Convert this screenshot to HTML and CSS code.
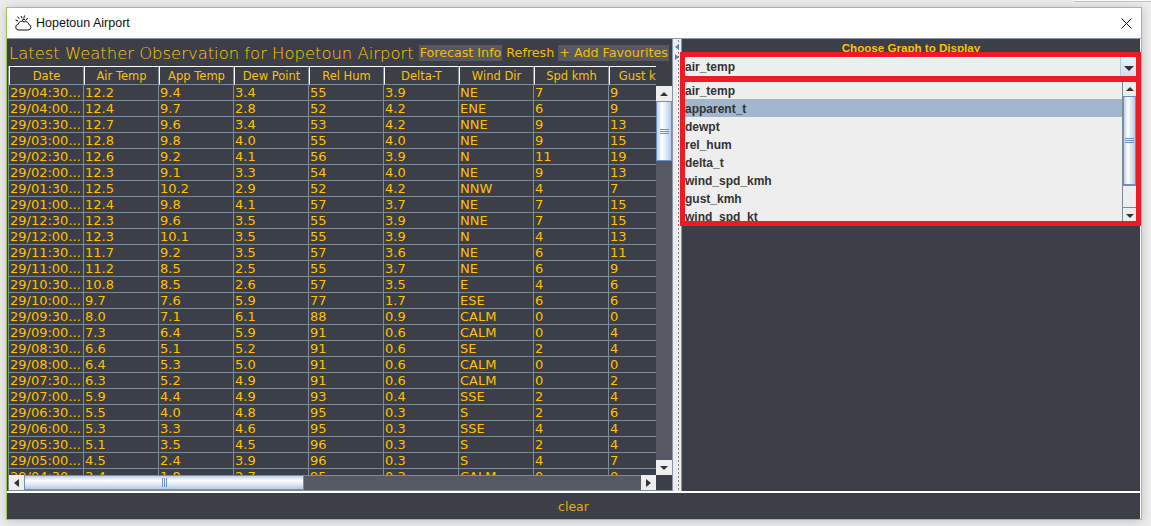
FILE: index.html
```html
<!DOCTYPE html>
<html lang="en">
    <head>
        <meta charset="UTF-8">
        <meta name="viewport" content="width=device-width, initial-scale=1.0">
        <title>Hopetoun Airport</title>
        <link rel="stylesheet" href="styles.css">
    </head>
    <body>
        <div class="window">
            <header class="titlebar">
                <svg class="app-icon" width="17" height="16" viewBox="0 0 17 16" fill="none" stroke="#111" stroke-width="1">
                    <path d="M3 15h10a2.8 2.8 0 0 0 .8-5.5a3.2 3.2 0 0 0-4.6-2.6a3.8 3.8 0 0 0-6 2.4a2.9 2.9 0 0 0-.2 5.7z"/>
                    <path d="M6 1l1.2 2.5M.5 5l2.5 .8M2.5 1.5l1.7 2.2M9.5 .5l-.7 3M13 3l-2.2 2M7 5.5l2-1.5l1.5 1.5"/>
                </svg>
                <span class="window-title">Hopetoun Airport</span>
                <svg class="close-icon" width="11" height="11" viewBox="0 0 11 11" stroke="#111" stroke-width="1"><path d="M.5 .5l10 10M10.5 .5l-10 10"/></svg>
            </header>
            <div class="content">
                <section class="left-pane">
                    <div class="obs-head">
                        <h1>Latest Weather Observation for Hopetoun Airport</h1>
                        <span class="head-btn active">Forecast Info</span>
                        <span class="head-btn">Refresh</span>
                        <span class="head-btn active">+ Add Favourites</span>
                    </div>
                    <div class="table-wrap">
                        <div class="table-row-wrap">
                            <div class="table-view">
                                <table class="obs-table">
                                    <thead>
                                        <tr><th>Date</th><th>Air Temp</th><th>App Temp</th><th>Dew Point</th><th>Rel Hum</th><th>Delta-T</th><th>Wind Dir</th><th>Spd kmh</th><th>Gust kmh</th></tr>
                                    </thead>
                                    <tbody>
                                        <tr><td>29/04:30...</td><td>12.2</td><td>9.4</td><td>3.4</td><td>55</td><td>3.9</td><td>NE</td><td>7</td><td>9</td></tr>
                                        <tr><td>29/04:00...</td><td>12.4</td><td>9.7</td><td>2.8</td><td>52</td><td>4.2</td><td>ENE</td><td>6</td><td>9</td></tr>
                                        <tr><td>29/03:30...</td><td>12.7</td><td>9.6</td><td>3.4</td><td>53</td><td>4.2</td><td>NNE</td><td>9</td><td>13</td></tr>
                                        <tr><td>29/03:00...</td><td>12.8</td><td>9.8</td><td>4.0</td><td>55</td><td>4.0</td><td>NE</td><td>9</td><td>15</td></tr>
                                        <tr><td>29/02:30...</td><td>12.6</td><td>9.2</td><td>4.1</td><td>56</td><td>3.9</td><td>N</td><td>11</td><td>19</td></tr>
                                        <tr><td>29/02:00...</td><td>12.3</td><td>9.1</td><td>3.3</td><td>54</td><td>4.0</td><td>NE</td><td>9</td><td>13</td></tr>
                                        <tr><td>29/01:30...</td><td>12.5</td><td>10.2</td><td>2.9</td><td>52</td><td>4.2</td><td>NNW</td><td>4</td><td>7</td></tr>
                                        <tr><td>29/01:00...</td><td>12.4</td><td>9.8</td><td>4.1</td><td>57</td><td>3.7</td><td>NE</td><td>7</td><td>15</td></tr>
                                        <tr><td>29/12:30...</td><td>12.3</td><td>9.6</td><td>3.5</td><td>55</td><td>3.9</td><td>NNE</td><td>7</td><td>15</td></tr>
                                        <tr><td>29/12:00...</td><td>12.3</td><td>10.1</td><td>3.5</td><td>55</td><td>3.9</td><td>N</td><td>4</td><td>13</td></tr>
                                        <tr><td>29/11:30...</td><td>11.7</td><td>9.2</td><td>3.5</td><td>57</td><td>3.6</td><td>NE</td><td>6</td><td>11</td></tr>
                                        <tr><td>29/11:00...</td><td>11.2</td><td>8.5</td><td>2.5</td><td>55</td><td>3.7</td><td>NE</td><td>6</td><td>9</td></tr>
                                        <tr><td>29/10:30...</td><td>10.8</td><td>8.5</td><td>2.6</td><td>57</td><td>3.5</td><td>E</td><td>4</td><td>6</td></tr>
                                        <tr><td>29/10:00...</td><td>9.7</td><td>7.6</td><td>5.9</td><td>77</td><td>1.7</td><td>ESE</td><td>6</td><td>6</td></tr>
                                        <tr><td>29/09:30...</td><td>8.0</td><td>7.1</td><td>6.1</td><td>88</td><td>0.9</td><td>CALM</td><td>0</td><td>0</td></tr>
                                        <tr><td>29/09:00...</td><td>7.3</td><td>6.4</td><td>5.9</td><td>91</td><td>0.6</td><td>CALM</td><td>0</td><td>4</td></tr>
                                        <tr><td>29/08:30...</td><td>6.6</td><td>5.1</td><td>5.2</td><td>91</td><td>0.6</td><td>SE</td><td>2</td><td>4</td></tr>
                                        <tr><td>29/08:00...</td><td>6.4</td><td>5.3</td><td>5.0</td><td>91</td><td>0.6</td><td>CALM</td><td>0</td><td>0</td></tr>
                                        <tr><td>29/07:30...</td><td>6.3</td><td>5.2</td><td>4.9</td><td>91</td><td>0.6</td><td>CALM</td><td>0</td><td>2</td></tr>
                                        <tr><td>29/07:00...</td><td>5.9</td><td>4.4</td><td>4.9</td><td>93</td><td>0.4</td><td>SSE</td><td>2</td><td>4</td></tr>
                                        <tr><td>29/06:30...</td><td>5.5</td><td>4.0</td><td>4.8</td><td>95</td><td>0.3</td><td>S</td><td>2</td><td>6</td></tr>
                                        <tr><td>29/06:00...</td><td>5.3</td><td>3.3</td><td>4.6</td><td>95</td><td>0.3</td><td>SSE</td><td>4</td><td>4</td></tr>
                                        <tr><td>29/05:30...</td><td>5.1</td><td>3.5</td><td>4.5</td><td>96</td><td>0.3</td><td>S</td><td>2</td><td>4</td></tr>
                                        <tr><td>29/05:00...</td><td>4.5</td><td>2.4</td><td>3.9</td><td>96</td><td>0.3</td><td>S</td><td>4</td><td>7</td></tr>
                                        <tr><td>29/04:30...</td><td>3.4</td><td>1.8</td><td>2.7</td><td>95</td><td>0.3</td><td>CALM</td><td>0</td><td>0</td></tr>
                                    </tbody>
                                </table>
                            </div>
                            <div class="vbar">
                                <div class="sb-btn"><span class="tri up"></span></div>
                                <div class="v-thumb"><span class="grip-h"></span></div>
                                <div class="sb-track"></div>
                                <div class="sb-btn"><span class="tri down"></span></div>
                            </div>
                        </div>
                        <div class="hbar">
                            <div class="sb-btn wide"><span class="tri left"></span></div>
                            <div class="h-thumb"><span class="grip-v"></span></div>
                            <div class="sb-track"></div>
                            <div class="sb-btn wide"><span class="tri right"></span></div>
                            <div class="hbar-corner"></div>
                        </div>
                    </div>
                </section>
                <div class="splitter">
                    <span class="tri small-left"></span>
                    <span class="tri small-right"></span>
                </div>
                <section class="right-pane">
                    <div class="graph-label">Choose Graph to Display</div>
                    <div class="combo">
                        <div class="combo-value">air_temp</div>
                        <div class="combo-arrow"><span class="tri down"></span></div>
                    </div>
                    <div class="popup">
                        <ul class="graph-list">
                            <li>air_temp</li>
                            <li class="selected">apparent_t</li>
                            <li>dewpt</li>
                            <li>rel_hum</li>
                            <li>delta_t</li>
                            <li>wind_spd_kmh</li>
                            <li>gust_kmh</li>
                            <li>wind_spd_kt</li>
                        </ul>
                        <div class="vbar">
                            <div class="sb-btn"><span class="tri up"></span></div>
                            <div class="v-thumb list-thumb"><span class="grip-h"></span></div>
                            <div class="sb-track light"></div>
                            <div class="sb-btn"><span class="tri down"></span></div>
                        </div>
                    </div>
                    <div class="annot combo-annot"></div>
                    <div class="annot list-annot"></div>
                </section>
            </div>
            <footer class="footer">clear</footer>
        </div>
    </body>
</html>
```

FILE: styles.css
```css
html, body {
    height: 100%;
}

body {
    margin: 0;
    padding: 7px 9px 6px 6px;
    box-sizing: border-box;
    background-color: #eeeeee;
    font-family: "DejaVu Sans", sans-serif;
    overflow: hidden;
}

/* tab edge of the window behind, top right */
body::before {
    content: '';
    position: absolute;
    top: 0;
    left: 1074px;
    right: 0;
    height: 1px;
    background-color: #fafafa;
    border-bottom: 1px solid #c4c4c4;
}

.window {
    width: 1136px;
    height: 513px;
    box-sizing: border-box;
    border: 1px solid #a3c75a;
    background-color: #fff;
    display: flex;
    flex-direction: column;
    box-shadow: 0 1px 10px rgba(0, 0, 0, 0.2);
}

.titlebar {
    height: 31px;
    flex: none;
    background-color: #fff;
    display: flex;
    align-items: center;
    padding: 0 9px 0 8px;
    border-bottom: 1px solid #8b97a6;
    box-sizing: border-box;
}

.app-icon {
    margin-right: 4px;
}

.window-title {
    font-family: "Liberation Sans", Arial, sans-serif;
    font-size: 12.5px;
    color: #111;
    flex: 1;
}

.content {
    flex: 1;
    display: flex;
    min-height: 0;
    margin-right: 1px;
    background-color: #3c3f47;
    border-bottom: 2px solid #fff;
}

.left-pane {
    width: 665px;
    flex: none;
    display: flex;
    flex-direction: column;
    box-sizing: border-box;
    padding-left: 1px;
}

.obs-head {
    height: 27px;
    flex: none;
    display: flex;
    align-items: center;
    white-space: nowrap;
    padding-left: 1px;
}

.obs-head h1 {
    margin: 1px 5px 0 0;
    font-size: 16.42px;
    font-weight: 200;
    color: #ffc800;
}

.head-btn {
    font-size: 12.7px;
    padding: 0 1px;
    height: 16px;
    line-height: 16px;
    margin-right: 3px;
    color: #f7bb00;
}

.head-btn.active {
    background-color: #565963;
}

.table-wrap {
    flex: 1;
    min-height: 0;
    display: flex;
    flex-direction: column;
    border-left: 1px solid #7d8a97;
}

.table-row-wrap {
    flex: 1;
    min-height: 0;
    display: flex;
}

.table-view {
    width: 647px;
    overflow: hidden;
}

.obs-table {
    border-collapse: separate;
    border-spacing: 0;
    table-layout: fixed;
    width: 675px;
    font-size: 13px;
    color: #ffc000;
}

.obs-table th {
    height: 19px;
    padding: 1px 0 0;
    box-sizing: border-box;
    font-size: 11.5px;
    font-weight: normal;
    white-space: nowrap;
    border-top: 1px solid #fff;
    border-left: 1px solid #fff;
    border-right: 1px solid #7d8a97;
    border-bottom: 1px solid #7d8a97;
    text-align: center;
}

.obs-table td {
    height: 16px;
    padding: 1px 0 0 1px;
    box-sizing: border-box;
    border-right: 1px solid #7d8a97;
    border-bottom: 1px solid #7d8a97;
    line-height: 14px;
    white-space: nowrap;
    overflow: hidden;
}

.vbar {
    width: 16px;
    flex: none;
    display: flex;
    flex-direction: column;
    padding-top: 20px;
    background-color: #3c3f47;
}

.sb-btn {
    height: 15px;
    flex: none;
    background-color: #eeeeee;
    display: flex;
    align-items: center;
    justify-content: center;
}

.sb-btn.wide {
    width: 15px;
    height: auto;
}

.sb-track {
    flex: 1;
    background-color: #565963;
}

.sb-track.light {
    background-color: #eeeeee;
    border-top: 1px solid #7d8a97;
    border-bottom: 1px solid #7d8a97;
}

.v-thumb {
    height: 60px;
    flex: none;
    box-sizing: border-box;
    border: 1px solid #6d8ec8;
    background: linear-gradient(90deg, #bcd0ea, #fff 35%, #e4edf7 60%, #b4c9e6);
    display: flex;
    align-items: center;
    justify-content: center;
}

.v-thumb.list-thumb {
    height: 89px;
}

.grip-h {
    width: 9px;
    height: 5px;
    background: repeating-linear-gradient(#6d8ec8 0, #6d8ec8 1px, transparent 1px, transparent 2px);
}

.hbar {
    height: 16px;
    flex: none;
    display: flex;
    border-bottom: 1px solid #7d8a97;
    box-sizing: border-box;
}

.hbar .sb-track {
    border-top: 1px solid #7d8a97;
}

.h-thumb {
    width: 280px;
    flex: none;
    box-sizing: border-box;
    border: 1px solid #6d8ec8;
    background: linear-gradient(#bcd0ea, #fff 35%, #e4edf7 60%, #b4c9e6);
    display: flex;
    align-items: center;
    justify-content: center;
}

.grip-v {
    width: 5px;
    height: 9px;
    background: repeating-linear-gradient(90deg, #6d8ec8 0, #6d8ec8 1px, transparent 1px, transparent 2px);
}

.hbar-corner {
    width: 16px;
    flex: none;
    background-color: #3c3f47;
}

.tri {
    width: 0;
    height: 0;
    display: block;
    border-style: solid;
    border-color: transparent;
}

.tri.up {
    border-width: 0 4.5px 4.5px;
    border-bottom-color: #333;
}

.tri.down {
    border-width: 4.5px 4.5px 0;
    border-top-color: #333;
}

.tri.left {
    border-width: 4.5px 5px 4.5px 0;
    border-right-color: #333;
}

.tri.right {
    border-width: 4.5px 0 4.5px 5px;
    border-left-color: #333;
}

.tri.small-left {
    border-width: 3.5px 4px 3.5px 0;
    border-right-color: #5d7fb8;
}

.tri.small-right {
    border-width: 3.5px 0 3.5px 4px;
    border-left-color: #5d7fb8;
}

.splitter {
    width: 10px;
    flex: none;
    box-sizing: border-box;
    border-left: 1px solid #8b97a6;
    border-right: 1px solid #8b97a6;
    background-color: #eeeeee;
    background-image: radial-gradient(#7d828c 0.8px, transparent 0.9px);
    background-size: 3px 4px;
    background-repeat: repeat-y;
    background-position: 4px 0;
    display: flex;
    flex-direction: column;
    align-items: flex-start;
    gap: 4px;
    padding: 5px 0 0 2px;
}

.right-pane {
    flex: 1;
    position: relative;
    min-width: 0;
    display: flex;
    flex-direction: column;
}

.graph-label {
    height: 18px;
    flex: none;
    text-align: center;
    font-family: "Liberation Sans", Arial, sans-serif;
    font-size: 11.6px;
    font-weight: bold;
    line-height: 17px;
    color: #ffc000;
}

.combo {
    height: 19px;
    flex: none;
    margin-right: 4px;
    display: flex;
    font-family: "Liberation Sans", Arial, sans-serif;
    font-size: 12px;
    font-weight: bold;
    color: #333;
}

.combo-value {
    flex: 1;
    background-color: #eeeeee;
    padding-left: 3px;
    line-height: 21px;
    border-right: 1px solid #b9cbe0;
}

.combo-arrow {
    width: 15px;
    flex: none;
    background: linear-gradient(#eef3f9, #d2dfef);
    display: flex;
    align-items: center;
    justify-content: center;
    padding-top: 3px;
    box-sizing: border-box;
}

.combo-arrow .tri.down {
    border-width: 5px 5px 0;
}

.popup {
    height: 142px;
    flex: none;
    margin-top: 5px;
    margin-right: 4px;
    display: flex;
    background-color: #eeeeee;
}

.graph-list {
    flex: 1;
    list-style: none;
    margin: 0;
    padding: 0;
    overflow: hidden;
    font-family: "Liberation Sans", Arial, sans-serif;
    font-size: 12px;
    font-weight: bold;
    color: #333;
}

.graph-list li {
    height: 18px;
    line-height: 20px;
    padding-left: 3px;
}

.graph-list li.selected {
    background-color: #a2b7cd;
}

.popup .vbar {
    padding-top: 0;
    width: 13px;
    background-color: #eeeeee;
    border-left: 1px solid #7d8a97;
}

.annot {
    position: absolute;
    left: -2px;
    right: -1px;
    box-sizing: border-box;
    border: 5px solid #ed1c24;
}

.combo-annot {
    top: 13px;
    height: 30px;
}

.list-annot {
    top: 37px;
    height: 150px;
}

.footer {
    height: 26px;
    flex: none;
    margin-right: 1px;
    background-color: #3c3f47;
    text-align: center;
    font-size: 12.5px;
    line-height: 28px;
    color: #e6ae08;
}
```
